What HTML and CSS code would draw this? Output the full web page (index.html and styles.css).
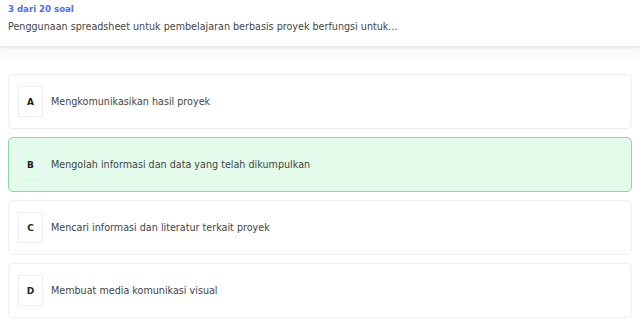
FILE: index.html
```html
<!DOCTYPE html>
<html lang="id">
<head>
    <meta charset="UTF-8">
    <meta name="viewport" content="width=device-width, initial-scale=1.0">
    <title>Soal 3 dari 20</title>
    <link rel="stylesheet" href="styles.css">
</head>
<body>
    <header class="question-header">
        <div class="question-count">3 dari 20 soal</div>
        <p class="question-text">Penggunaan spreadsheet untuk pembelajaran berbasis proyek berfungsi untuk...</p>
    </header>

    <div class="spacer"></div>

    <main class="options">
        <div class="option">
            <span class="option-letter">A</span>
            <span class="option-text">Mengkomunikasikan hasil proyek</span>
        </div>
        <div class="option selected">
            <span class="option-letter">B</span>
            <span class="option-text">Mengolah informasi dan data yang telah dikumpulkan</span>
        </div>
        <div class="option">
            <span class="option-letter">C</span>
            <span class="option-text">Mencari informasi dan literatur terkait proyek</span>
        </div>
        <div class="option">
            <span class="option-letter">D</span>
            <span class="option-text">Membuat media komunikasi visual</span>
        </div>
    </main>
</body>
</html>
```

FILE: styles.css
```css
:root {
    --primary-color: #4b6bf5;
    --text-color: #444;
    --border-color: #eceef3;
    --selected-bg: #e3fbea;
    --selected-border: #8bd9a2;
}

body {
    font-family: "DejaVu Sans", sans-serif;
    margin: 0;
    padding: 0;
    background-color: #fff;
    color: var(--text-color);
}

.question-header {
    padding: 2px 8px 12px;
    background-color: #fff;
    box-shadow: 0 2px 3px rgba(0, 0, 0, 0.08);
    position: relative;
}

.question-count {
    color: var(--primary-color);
    font-size: 8.6px;
    font-weight: bold;
    line-height: 14px;
}

.question-text {
    margin: 4px 0 0;
    font-size: 9.6px;
    line-height: 14px;
}

.spacer {
    height: 13px;
    background-color: #f8f9fa;
}

.options {
    display: flex;
    flex-direction: column;
    gap: 8px;
    padding: 15px 8px 0;
}

.option {
    display: flex;
    align-items: center;
    gap: 8px;
    height: 55px;
    box-sizing: border-box;
    padding: 0 9px;
    border: 1px solid var(--border-color);
    border-radius: 5px;
    background-color: #fff;
}

.option.selected {
    background-color: var(--selected-bg);
    border-color: var(--selected-border);
}

.option-letter {
    display: flex;
    align-items: center;
    justify-content: center;
    width: 25px;
    height: 31px;
    box-sizing: border-box;
    border: 1px solid var(--border-color);
    font-size: 9px;
    font-weight: bold;
    color: #222;
}

.option-text {
    font-size: 9.6px;
}
```
